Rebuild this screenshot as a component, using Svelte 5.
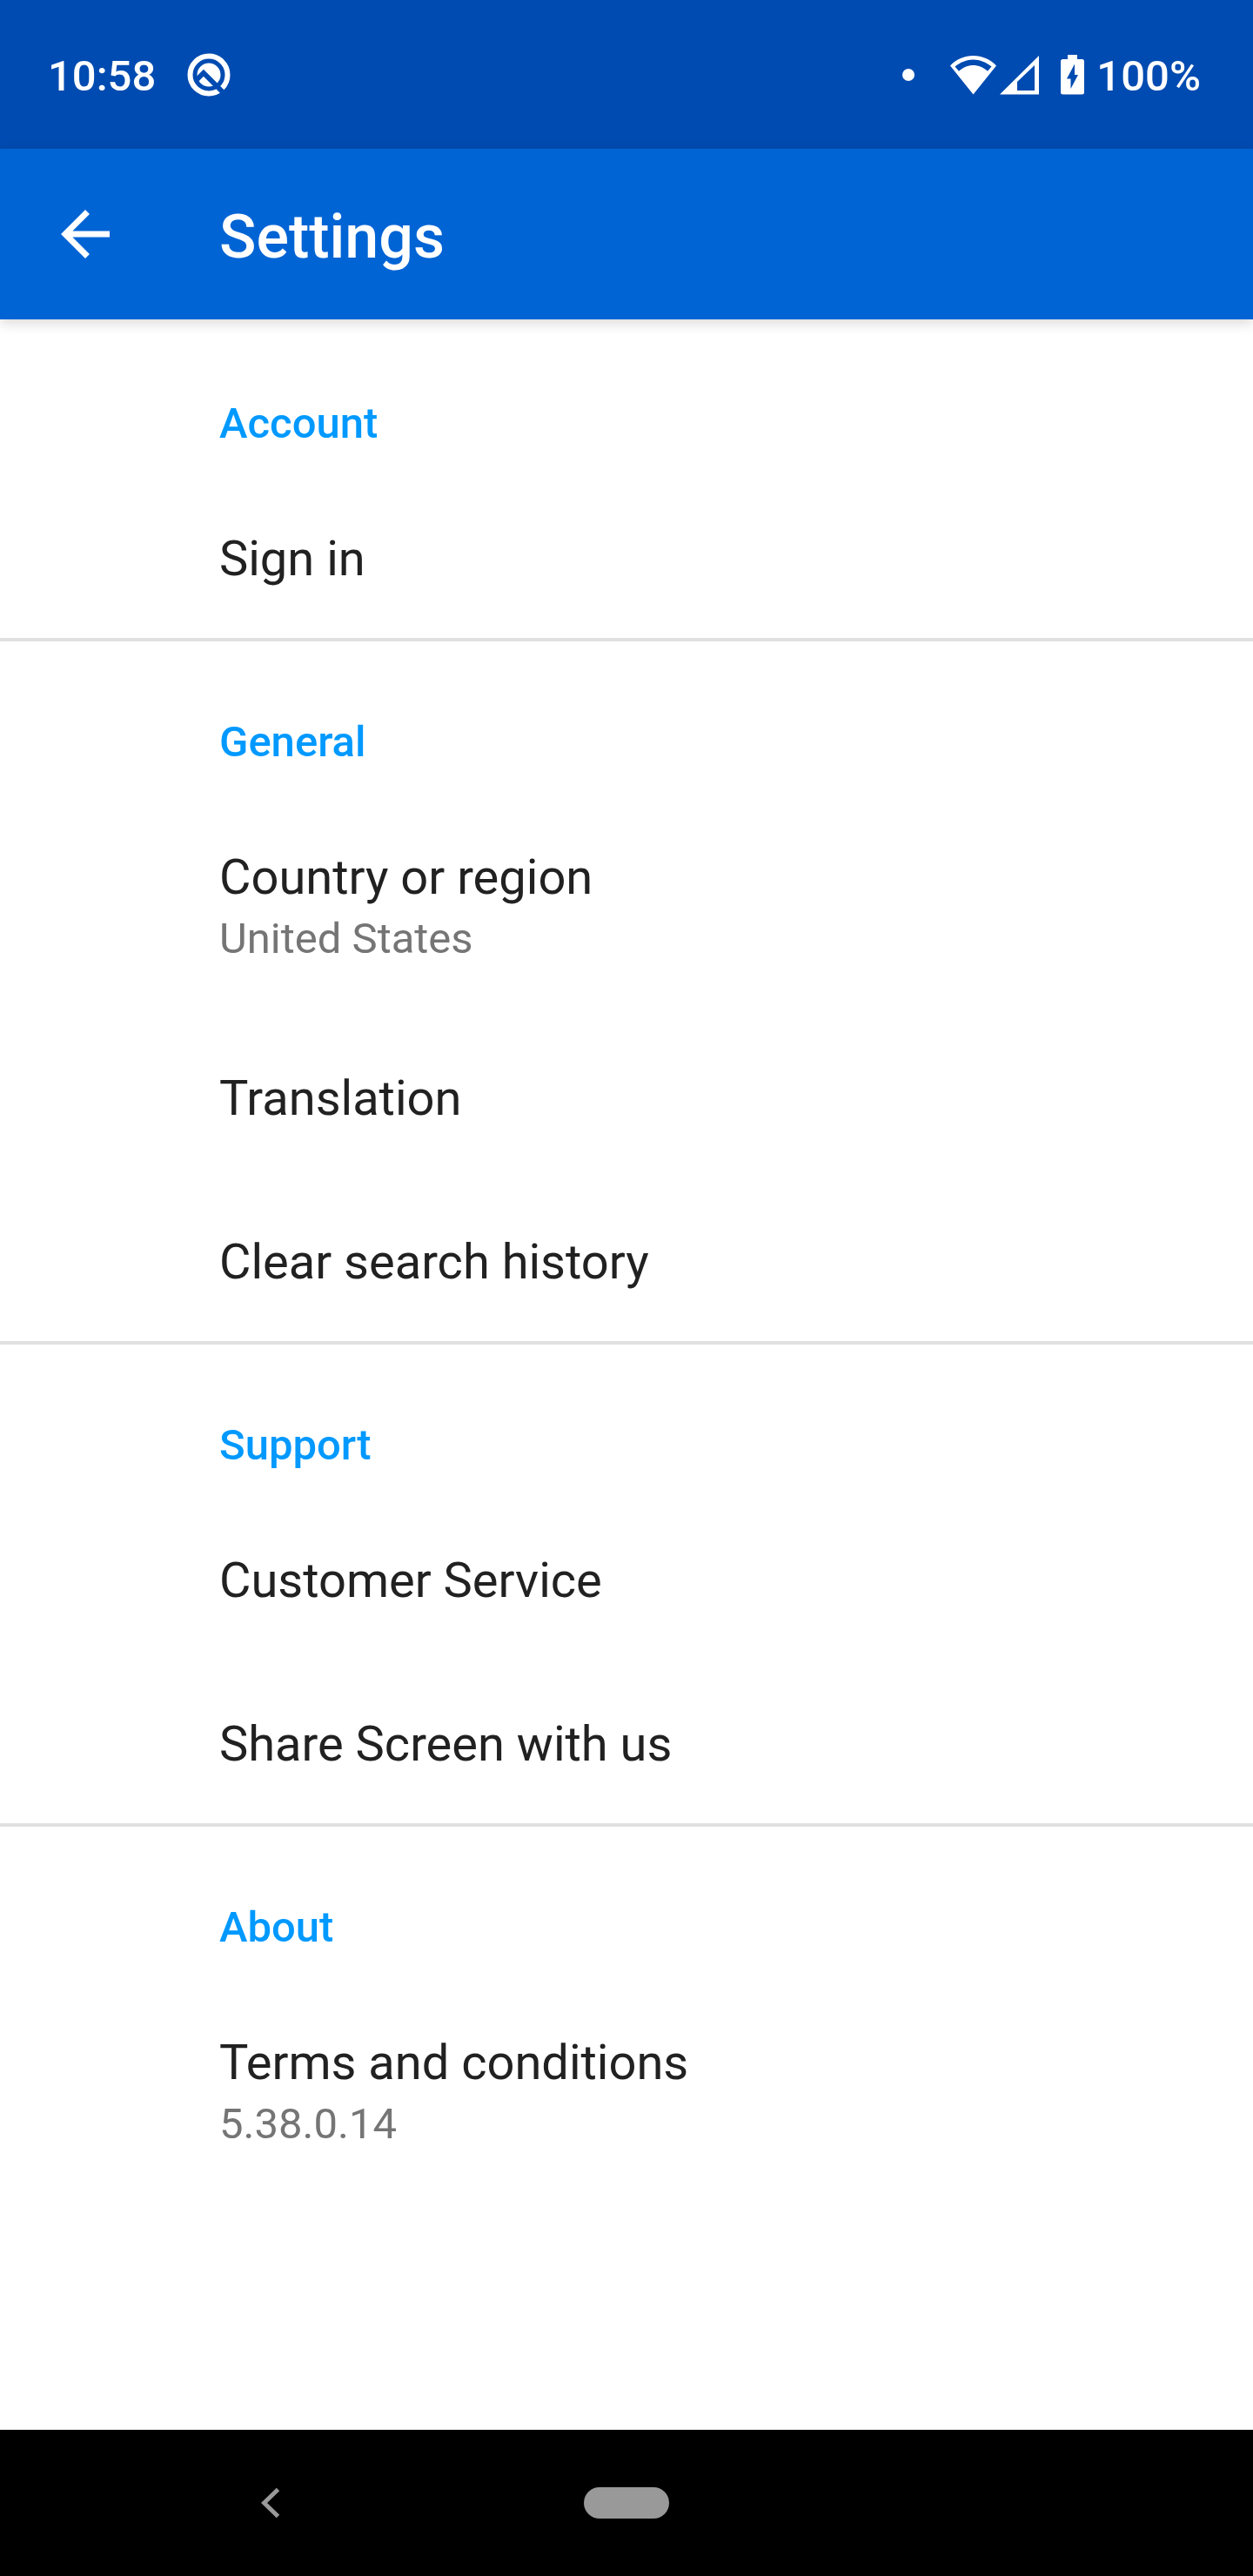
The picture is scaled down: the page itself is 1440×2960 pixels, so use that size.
<script>
  const sections = [
    { title: 'Account', items: [{ label: 'Sign in' }] },
    {
      title: 'General',
      items: [
        { label: 'Country or region', summary: 'United States' },
        { label: 'Translation' },
        { label: 'Clear search history' },
      ],
    },
    { title: 'Support', items: [{ label: 'Customer Service' }, { label: 'Share Screen with us' }] },
    { title: 'About', items: [{ label: 'Terms and conditions', summary: '5.38.0.14' }] },
  ];
</script>

<div class="screen">
  <div class="status">
    <span class="clock">10:58</span>
    <svg class="q" width="50" height="50" viewBox="0 0 50 50" aria-hidden="true">
      <circle cx="25" cy="25" r="21.5" fill="none" stroke="#fff" stroke-width="6" />
      <circle cx="25" cy="25" r="13.5" fill="#fff" />
      <path d="M10 31.700L18.900 22.800L46 49.900" fill="none" stroke="#004bb1" stroke-width="5.700" />
    </svg>
    <div class="indicators">
      <svg width="14" height="46" viewBox="0 0 14 46" aria-hidden="true"><circle cx="7" cy="23" r="7" fill="#fff" /></svg>
      <svg class="wifi" width="53" height="46" viewBox="0 0 53 46" aria-hidden="true">
        <path fill="#fff" fill-rule="evenodd" d="M0 12.5C7 5 16.500 1 26.500 1S46 5 53 12.500L26.500 45.500ZM5.500 13.500L10 18.800C14.500 14.500 20.500 12 26.500 12S38.500 14.500 43 18.800L47.500 13.500C41.500 8.500 34 5.500 26.500 5.500S11.500 8.500 5.500 13.500Z" />
      </svg>
      <svg class="signal" width="45" height="46" viewBox="0 0 45 46" aria-hidden="true">
        <path fill="#fff" fill-rule="evenodd" d="M0 45.500L45 1V45.500ZM20 31V41H40V12Z" />
      </svg>
      <svg class="battery" width="27" height="46" viewBox="0 0 27 46" aria-hidden="true">
        <path fill="#fff" fill-rule="evenodd" d="M8 0H19V5H24.500Q27 5 27 7.500V43Q27 45.500 24.500 45.500H2.500Q0 45.500 0 43V7.500Q0 5 2.500 5H8ZM16 10.500L7 27.500H11.500V39L20 23H16Z" />
      </svg>
      <span class="percent">100%</span>
    </div>
  </div>

  <header>
    <button class="back" aria-label="Navigate up">
      <svg width="84" height="84" viewBox="0 0 24 24"><path fill="#fff" d="M20 11H7.83l5.59-5.59L12 4l-8 8 8 8 1.410-1.410L7.830 13H20z" /></svg>
    </button>
    <h1>Settings</h1>
  </header>

  <main>
    {#each sections as section}
      <section>
        <h2>{section.title}</h2>
        {#each section.items as item}
          <button class="row">
            <span class="label">{item.label}</span>
            {#if item.summary}<span class="summary">{item.summary}</span>{/if}
          </button>
        {/each}
      </section>
    {/each}
  </main>

  <nav>
    <button aria-label="Back">
      <svg width="22" height="36" viewBox="0 0 22 36"><path d="M19.500 2.500L3.500 18L19.500 33.500" fill="none" stroke="#999" stroke-width="5" /></svg>
    </button>
    <button aria-label="Home"><span class="pill"></span></button>
  </nav>
</div>

<style>
  :global(body) {
    background: #fff;
  }
  .screen {
    min-height: 100vh;
    display: flex;
    flex-direction: column;
    font-family: Roboto, 'Liberation Sans', sans-serif;
    color: #212121;
  }
  button {
    border: 0;
    padding: 0;
    background: none;
    font: inherit;
    color: inherit;
    text-align: left;
    cursor: pointer;
  }
  svg {
    display: block;
    flex: none;
  }
  .status {
    box-sizing: border-box;
    min-height: 171px;
    padding: 0 60px 0 55px;
    display: flex;
    align-items: center;
    background: #004bb1;
    color: #fff;
    font-size: 49px;
    line-height: 57px;
    font-weight: 500;
  }
  .clock,
  .percent {
    padding-top: 4px;
  }
  .q {
    margin-left: 36px;
  }
  .indicators {
    margin-left: auto;
    display: flex;
    align-items: center;
  }
  .wifi {
    margin-left: 41px;
  }
  .signal {
    margin-left: 4px;
  }
  .battery {
    margin-left: 25px;
    margin-right: 14px;
  }
  header {
    box-sizing: border-box;
    min-height: 196px;
    padding: 0 56px;
    display: flex;
    align-items: center;
    gap: 112px;
    background: #0064d5;
    color: #fff;
    box-shadow: 0 4px 14px rgba(0, 0, 0, 0.16);
  }
  h1,
  h2 {
    margin: 0;
    font-weight: 500;
  }
  h1 {
    padding-top: 6px;
    font-size: 70px;
    line-height: 82px;
  }
  main {
    flex: 1;
  }
  section + section {
    border-top: 4px solid #e0e0e0;
  }
  h2 {
    padding: 87px 56px 30px 252px;
    font-size: 49px;
    line-height: 57px;
    color: #0099ff;
  }
  section:first-child h2 {
    padding-top: 91px;
  }
  .row {
    width: 100%;
    padding: 64px 56px 58px 252px;
    display: flex;
    flex-direction: column;
    gap: 9px;
  }
  .label {
    font-size: 56px;
    line-height: 66px;
  }
  .summary {
    font-size: 49px;
    line-height: 57px;
    color: #757575;
  }
  nav {
    height: 168px;
    padding: 0 106px;
    display: grid;
    grid-template-columns: repeat(3, 1fr);
    background: #000;
  }
  nav button {
    display: flex;
    align-items: center;
    justify-content: center;
  }
  .pill {
    width: 98px;
    height: 36px;
    border-radius: 18px;
    background: #999;
  }
</style>
